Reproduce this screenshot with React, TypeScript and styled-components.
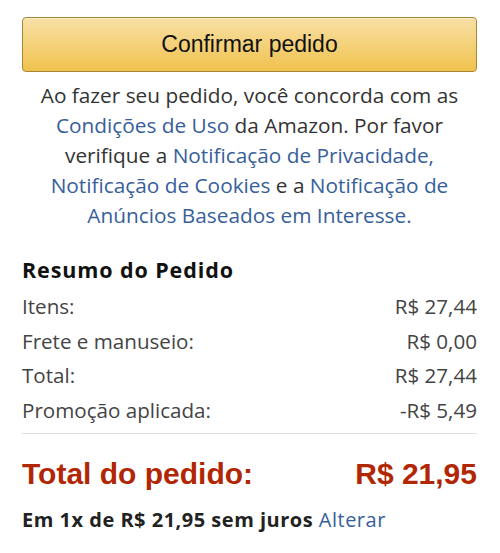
import React from "react";
import styled, { createGlobalStyle } from "styled-components";

const Global = createGlobalStyle`
  html, body { margin: 0; padding: 0; background: #fff; }
  body { font-family: "Open Sans", "Noto Sans", sans-serif; color: #333; }
`;

const Page = styled.div`
  width: 500px;
  box-sizing: border-box;
  padding: 17px 23px 0 22px;
  display: flex;
  flex-direction: column;
`;

const ConfirmButton = styled.button`
  height: 55px;
  width: 100%;
  box-sizing: border-box;
  border: 1px solid #a88734;
  border-radius: 4px;
  background: linear-gradient(to bottom, #f8e0a6, #f0c24d);
  box-shadow: inset 0 1px 0 rgba(255, 255, 255, 0.4);
  font-family: "Liberation Sans", Arial, sans-serif;
  font-size: 23px;
  color: #111;
  cursor: pointer;
`;

const Legal = styled.p`
  margin: 8px 0 0;
  text-align: center;
  font-size: 20.8px;
  line-height: 30px;
  color: #333;
`;

const Link = styled.a`
  color: #36609a;
  text-decoration: none;
`;

const Summary = styled.div`
  margin-top: 27px;
  display: flex;
  flex-direction: column;
`;

const SummaryTitle = styled.h3`
  margin: 0 0 6px;
  font-size: 21.5px;
  font-weight: 700;
  letter-spacing: 0.9px;
  line-height: 26px;
  color: #111;
`;

const Row = styled.div`
  display: flex;
  justify-content: space-between;
  font-size: 20.6px;
  line-height: 34.7px;
  color: #444;
`;

const Divider = styled.hr`
  margin: 5px 0 0;
  border: none;
  border-top: 1px solid #ddd;
`;

const TotalRow = styled.div`
  margin-top: 23px;
  display: flex;
  justify-content: space-between;
  font-family: "Liberation Sans", Arial, sans-serif;
  font-size: 30px;
  font-weight: 700;
  line-height: 34px;
  color: #b12704;
`;

const Installments = styled.div`
  margin-top: 17px;
  font-size: 20px;
  font-weight: 700;
  letter-spacing: 0.5px;
  color: #222;
  line-height: 24px;
`;

const InlineLink = styled(Link)`
  font-weight: 400;
`;

const rows: [string, string][] = [
  ["Itens:", "R$ 27,44"],
  ["Frete e manuseio:", "R$ 0,00"],
  ["Total:", "R$ 27,44"],
  ["Promoção aplicada:", "-R$ 5,49"],
];

export default function App() {
  return (
    <>
      <Global />
      <Page>
        <ConfirmButton>Confirmar pedido</ConfirmButton>
        <Legal>
          Ao fazer seu pedido, você concorda com as{" "}
          <Link href="#">Condições de Uso</Link> da Amazon. Por favor verifique a{" "}
          <Link href="#">Notificação de Privacidade,</Link>{" "}
          <Link href="#">Notificação de Cookies</Link> e a{" "}
          <Link href="#">Notificação de Anúncios Baseados em Interesse.</Link>
        </Legal>
        <Summary>
          <SummaryTitle>Resumo do Pedido</SummaryTitle>
          {rows.map(([label, value]) => (
            <Row key={label}>
              <span>{label}</span>
              <span>{value}</span>
            </Row>
          ))}
          <Divider />
          <TotalRow>
            <span>Total do pedido:</span>
            <span>R$ 21,95</span>
          </TotalRow>
          <Installments>
            Em 1x de R$ 21,95 sem juros <InlineLink href="#">Alterar</InlineLink>
          </Installments>
        </Summary>
      </Page>
    </>
  );
}
